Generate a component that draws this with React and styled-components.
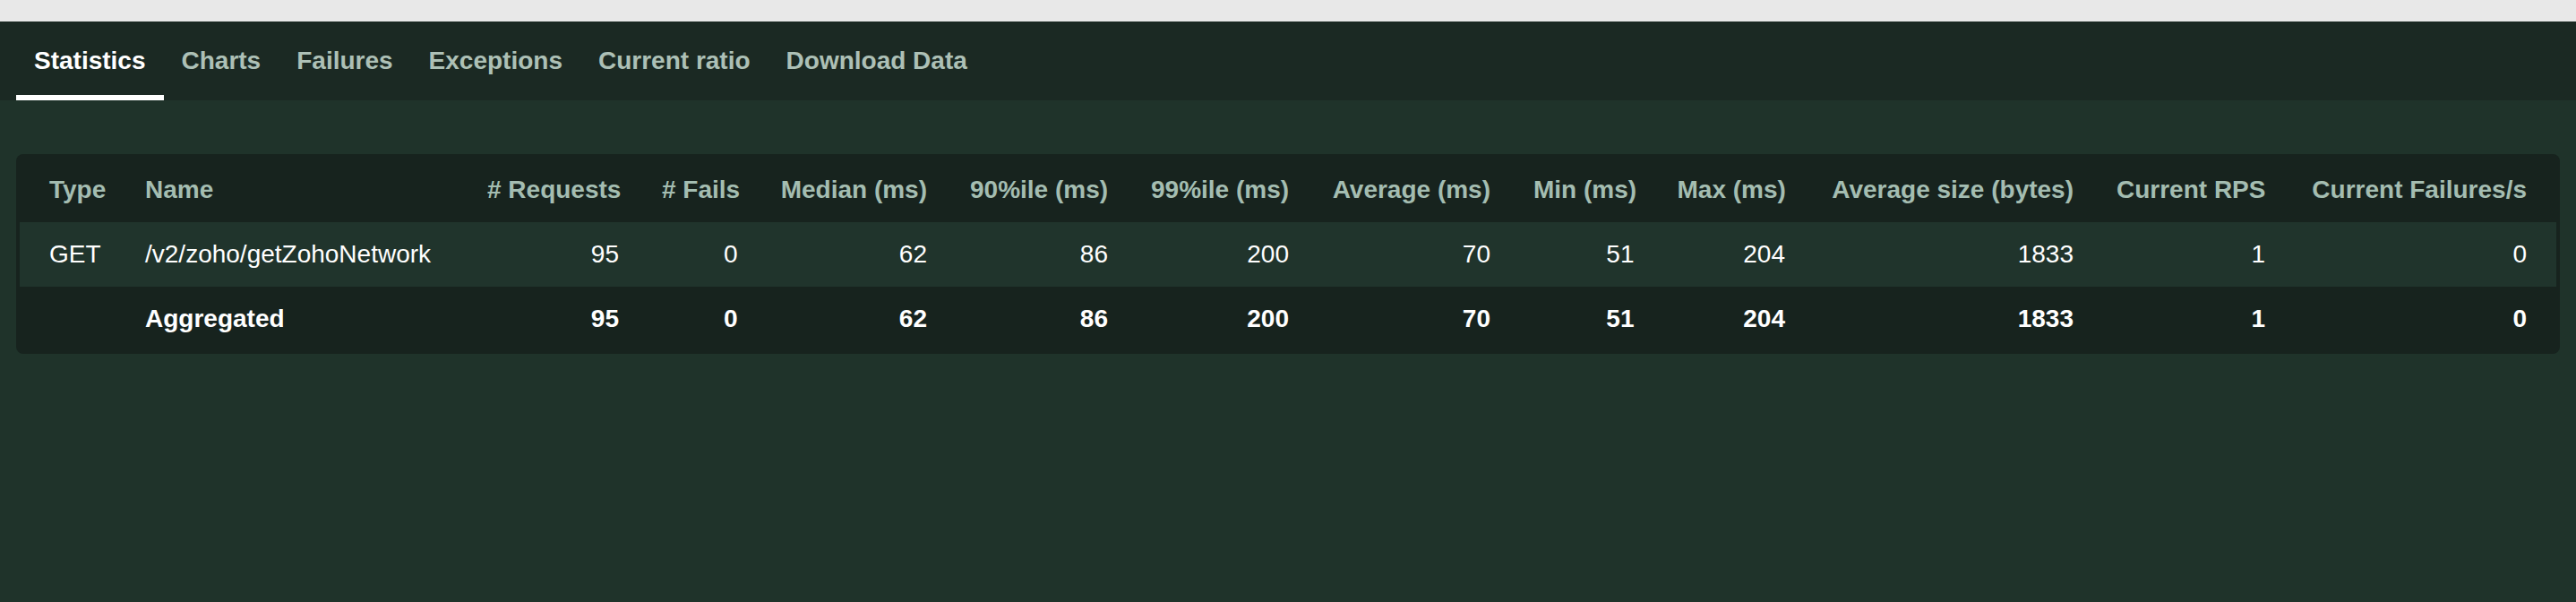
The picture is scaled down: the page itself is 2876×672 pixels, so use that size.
import React from "react";
import styled, { createGlobalStyle } from "styled-components";

const GlobalStyle = createGlobalStyle`
  html, body {
    margin: 0;
    padding: 0;
    background: #1f332a;
    font-family: "Liberation Sans", Arial, sans-serif;
  }
  * { box-sizing: border-box; }
`;

const Page = styled.div`
  min-height: 672px;
  background: #1f332a;
  display: flex;
  flex-direction: column;
`;

const TopStrip = styled.div`
  height: 24px;
  background: #e8e8e8;
`;

const TabBar = styled.nav`
  height: 88px;
  background: #1b2923;
  display: flex;
  align-items: stretch;
  padding: 0 18px;
`;

const Tab = styled.div`
  display: flex;
  align-items: center;
  padding: 6px 20px 0;
  border-bottom: 6px solid ${(p) => (p.$active ? "#ffffff" : "transparent")};
  font-size: 28px;
  font-weight: 700;
  color: ${(p) => (p.$active ? "#ffffff" : "#adc0b6")};
  white-space: nowrap;
  cursor: pointer;
`;

const Content = styled.main`
  padding: 60px 18px 0;
`;

const Card = styled.div`
  background: #17231e;
  border-radius: 8px;
  padding: 4px 4px 3px;
`;

const Table = styled.table`
  width: 100%;
  border-collapse: collapse;
  table-layout: fixed;
`;

const Row = styled.tr`
  height: 72px;
  background: ${(p) => (p.$shaded ? "#20342c" : "transparent")};
`;

const HeadCell = styled.th`
  font-size: 28px;
  font-weight: 700;
  color: #a4bdb1;
  text-align: ${(p) => (p.$left ? "left" : "right")};
  padding: 0 24px;
  white-space: nowrap;
  vertical-align: middle;
  &:first-child { padding-left: 33px; }
  &:last-child { padding-right: 33px; }
`;

const Cell = styled.td`
  font-size: 28px;
  font-weight: ${(p) => (p.$bold ? 700 : 400)};
  color: #ffffff;
  text-align: ${(p) => (p.$left ? "left" : "right")};
  padding: 0 24px;
  white-space: nowrap;
  vertical-align: middle;
  &:first-child { padding-left: 33px; }
  &:last-child { padding-right: 33px; }
`;

const tabs = ["Statistics", "Charts", "Failures", "Exceptions", "Current ratio", "Download Data"];

const columns = [
  { label: "Type", width: 116, left: true },
  { label: "Name", width: 382, left: true },
  { label: "# Requests", width: 195 },
  { label: "# Fails", width: 132.5 },
  { label: "Median (ms)", width: 211.5 },
  { label: "90%ile (ms)", width: 202 },
  { label: "99%ile (ms)", width: 202 },
  { label: "Average (ms)", width: 225 },
  { label: "Min (ms)", width: 160.5 },
  { label: "Max (ms)", width: 168.5 },
  { label: "Average size (bytes)", width: 322 },
  { label: "Current RPS", width: 214 },
  { label: "Current Failures/s", width: 301 },
];

const rows = [
  { values: ["GET", "/v2/zoho/getZohoNetwork", "95", "0", "62", "86", "200", "70", "51", "204", "1833", "1", "0"], shaded: true, bold: false },
  { values: ["", "Aggregated", "95", "0", "62", "86", "200", "70", "51", "204", "1833", "1", "0"], shaded: false, bold: true },
];

export default function App() {
  return (
    <>
      <GlobalStyle />
      <Page>
        <TopStrip />
        <TabBar>
          {tabs.map((t, i) => (
            <Tab key={t} $active={i === 0}>{t}</Tab>
          ))}
        </TabBar>
        <Content>
          <Card>
            <Table>
              <colgroup>
                {columns.map((c) => (
                  <col key={c.label} style={{ width: `${c.width}px` }} />
                ))}
              </colgroup>
              <thead>
                <Row>
                  {columns.map((c) => (
                    <HeadCell key={c.label} $left={c.left}>{c.label}</HeadCell>
                  ))}
                </Row>
              </thead>
              <tbody>
                {rows.map((r, ri) => (
                  <Row key={ri} $shaded={r.shaded}>
                    {r.values.map((v, ci) => (
                      <Cell key={ci} $left={columns[ci].left} $bold={r.bold}>{v}</Cell>
                    ))}
                  </Row>
                ))}
              </tbody>
            </Table>
          </Card>
        </Content>
      </Page>
    </>
  );
}
